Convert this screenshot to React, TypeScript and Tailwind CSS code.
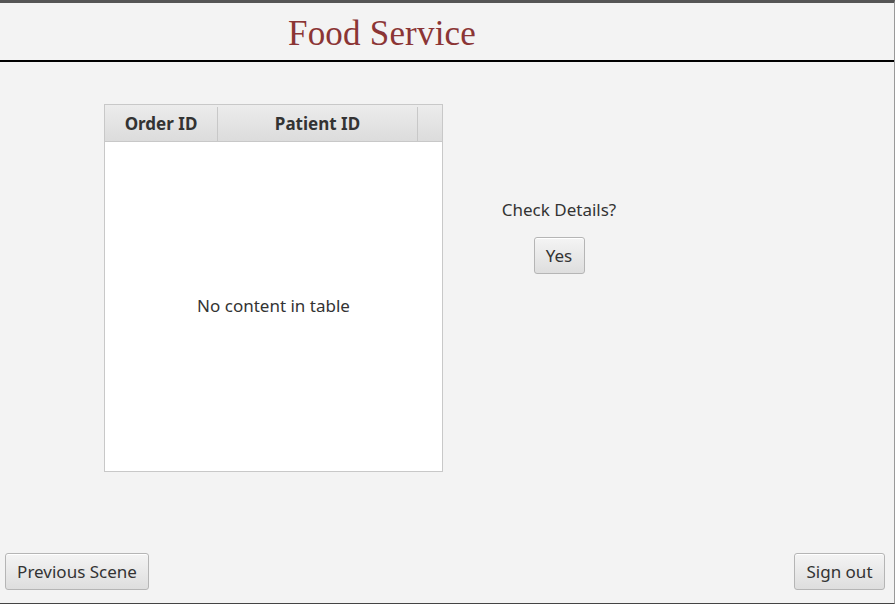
export default function App() {
  const ui = { fontFamily: '"Noto Sans", "Open Sans", sans-serif' };
  const btn =
    'rounded-[3px] border border-[#b5b5b5] bg-gradient-to-b from-[#f4f4f4] to-[#dedede] text-[17px] text-[#333] shadow-[inset_0_1px_0_#fff]';

  return (
    <div className="w-[895px] h-[604px] bg-[#f3f3f3] flex flex-col border-t-[3px] border-t-[#555] border-b border-b-[#444] border-r border-r-[#999] overflow-hidden" style={ui}>
      {/* Header */}
      <div className="h-[59px] border-b-2 border-black flex items-center">
        <h1
          className="ml-[288px] mt-[4px] text-[35px] text-[#8b3535] leading-none tracking-[0.2px]"
          style={{ fontFamily: '"Liberation Serif", "DejaVu Serif", serif' }}
        >
          Food Service
        </h1>
      </div>

      {/* Body */}
      <div className="flex-1 flex">
        {/* Table */}
        <div className="ml-[104px] mt-[42px] w-[339px] h-[368px] border border-[#c8c8c8] bg-white flex flex-col">
          <div className="h-[37px] flex border-b border-[#c8c8c8] bg-gradient-to-b from-[#ececec] to-[#dcdcdc] text-[17px] font-bold text-[#333] pt-[2px]">
            <div className="w-[113px] flex items-center justify-center border-r border-[#c8c8c8]">Order ID</div>
            <div className="w-[200px] flex items-center justify-center border-r border-[#c8c8c8]">Patient ID</div>
            <div className="flex-1" />
          </div>
          <div className="flex-1 flex items-center justify-center text-[17px] text-[#333] pb-[2px]">
            No content in table
          </div>
        </div>

        {/* Right side */}
        <div className="ml-[58px] mt-[137px] w-[116px] flex flex-col items-center">
          <div className="text-[17px] text-[#333] leading-[22px]">Check Details?</div>
          <button className={`${btn} mt-[16px] w-[51px] h-[37px]`}>Yes</button>
        </div>
      </div>

      {/* Footer */}
      <div className="flex justify-between items-center px-[5px] pb-[13px]">
        <button className={`${btn} w-[144px] h-[37px]`}>Previous Scene</button>
        <button className={`${btn} w-[91px] h-[37px] mr-[4px]`}>Sign out</button>
      </div>
    </div>
  );
}
